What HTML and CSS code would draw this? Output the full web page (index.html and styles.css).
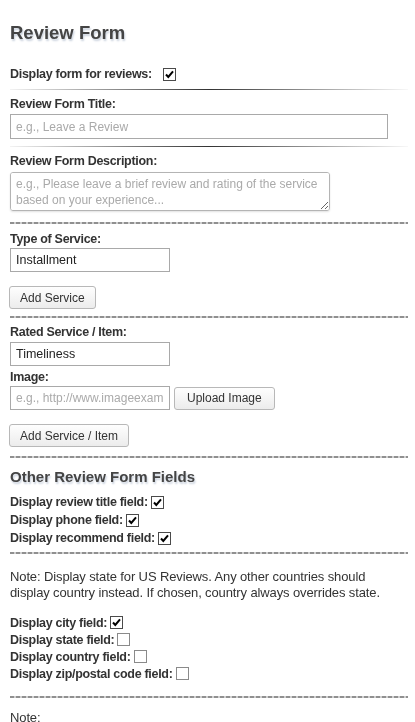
FILE: index.html
```html
<!DOCTYPE html>
<html lang="en">
<head>
    <meta charset="UTF-8">
    <meta name="viewport" content="width=device-width, initial-scale=1.0">
    <title>Review Form</title>
    <link rel="stylesheet" href="styles.css">
</head>
<body>
    <h2 class="form-title">Review Form</h2>

    <div class="toggle-row">
        <label>Display form for reviews:</label>
        <span class="cb checked"><svg viewBox="0 0 11 11"><path d="M2 5.5 L4.3 8 L9 2.3"/></svg></span>
    </div>
    <hr class="fade">

    <label class="field-label first">Review Form Title:</label>
    <input type="text" class="text-input full" placeholder="e.g., Leave a Review">
    <hr class="fade">

    <label class="field-label first">Review Form Description:</label>
    <textarea class="desc-input" placeholder="e.g., Please leave a brief review and rating of the service based on your experience..."></textarea>
    <hr class="dash dash-1">

    <label class="field-label after-dash">Type of Service:</label>
    <input type="text" class="text-input short tight" value="Installment">
    <button class="btn add-btn">Add Service</button>
    <hr class="dash">

    <label class="field-label first">Rated Service / Item:</label>
    <input type="text" class="text-input short" value="Timeliness">
    <label class="field-label image-label">Image:</label>
    <div class="image-row">
        <input type="text" class="text-input short" placeholder="e.g., http://www.imageexample.com/photo.jpg">
        <button class="btn upload-btn">Upload Image</button>
    </div>
    <button class="btn add-btn">Add Service / Item</button>
    <hr class="dash dash-2">

    <h3 class="sub-title">Other Review Form Fields</h3>
    <div class="check-list">
        <div class="check-row">Display review title field: <span class="cb checked"><svg viewBox="0 0 11 11"><path d="M2 5.5 L4.3 8 L9 2.3"/></svg></span></div>
        <div class="check-row">Display phone field: <span class="cb checked"><svg viewBox="0 0 11 11"><path d="M2 5.5 L4.3 8 L9 2.3"/></svg></span></div>
        <div class="check-row">Display recommend field: <span class="cb checked"><svg viewBox="0 0 11 11"><path d="M2 5.5 L4.3 8 L9 2.3"/></svg></span></div>
    </div>
    <hr class="dash dash-3">

    <p class="note">Note: Display state for US Reviews. Any other countries should display country instead. If chosen, country always overrides state.</p>

    <div class="check-list loc-list">
        <div class="check-row">Display city field: <span class="cb checked"><svg viewBox="0 0 11 11"><path d="M2 5.5 L4.3 8 L9 2.3"/></svg></span></div>
        <div class="check-row">Display state field: <span class="cb"></span></div>
        <div class="check-row">Display country field: <span class="cb"></span></div>
        <div class="check-row">Display zip/postal code field: <span class="cb"></span></div>
    </div>
    <hr class="dash dash-4">

    <p class="note last-note">Note:</p>
</body>
</html>
```

FILE: styles.css
```css
body {
    margin: 0;
    padding: 0 7px 0 10px;
    font-family: "Liberation Sans", Arial, sans-serif;
    font-size: 12px;
    color: #333;
}

.form-title {
    margin: 22px 0 0;
    font-size: 18.5px;
    line-height: 22px;
    color: #444;
    text-shadow: 1px 2px 2px #c9d1dd;
}

.toggle-row {
    margin-top: 22px;
    display: flex;
    align-items: center;
    height: 16px;
    font-weight: bold;
    font-size: 12.5px;
    letter-spacing: -0.3px;
}

.toggle-row .cb {
    margin-left: 11px;
}

hr {
    border: 0;
    margin: 0;
}

hr.fade {
    margin-top: 7px;
    height: 1px;
    background: linear-gradient(to right, rgba(0,0,0,0.05), rgba(0,0,0,0.8) 50%, rgba(0,0,0,0.03));
}

hr.dash {
    margin-top: 7px;
    height: 2px;
    background: repeating-linear-gradient(to right, #909090 0 4px, #cfcfcf 4px 6px);
}

hr.dash-1 { margin-top: 11px; }
hr.dash-2 { margin-top: 9px; }
hr.dash-3 { margin-top: 5px; }
hr.dash-4 { margin-top: 14px; }

.field-label {
    display: block;
    font-weight: bold;
    font-size: 12.5px;
    letter-spacing: -0.3px;
    line-height: 16px;
}

.field-label.first { margin-top: 6px; }
.field-label.after-dash { margin-top: 7px; }
.field-label.image-label { margin-top: 3px; }

.text-input {
    display: block;
    box-sizing: border-box;
    margin: 2px 0 0;
    height: 24px;
    padding: 0 5px;
    border: 1px solid #a9a9a9;
    border-radius: 0;
    font-family: inherit;
    font-size: 12.5px;
    color: #222;
    background: #fff;
}

.text-input.full {
    width: 378px;
    height: 25px;
}

.text-input.short {
    width: 160px;
}

.text-input.tight { margin-top: 1px; }

::placeholder {
    color: #aaa;
    font-size: 12px;
}

.desc-input {
    display: block;
    box-sizing: border-box;
    margin-top: 3px;
    width: 320px;
    height: 39px;
    padding: 3px 5px;
    border: 1px solid #b4b4b4;
    border-radius: 3px;
    box-shadow: 0 1px 2px rgba(0,0,0,0.12);
    font-family: inherit;
    font-size: 12px;
    line-height: 16px;
    resize: vertical;
}

.btn {
    display: block;
    box-sizing: border-box;
    height: 23px;
    padding: 0 10px;
    border: 1px solid #b8b8b8;
    border-radius: 3px;
    background: linear-gradient(#fefefe, #ececec);
    font-family: inherit;
    font-size: 12px;
    color: #333;
}

.upload-btn {
    padding: 0 12px;
}

.add-btn {
    margin-top: 14px;
    margin-left: -1px;
}

.image-row {
    display: flex;
    align-items: center;
    gap: 4px;
    margin-top: 1px;
}

.image-row .text-input {
    margin: 0;
}

.sub-title {
    margin: 9px 0 0;
    font-size: 15px;
    line-height: 20px;
    color: #444;
    text-shadow: 1px 2px 2px #c9d1dd;
}

.check-list {
    margin-top: 6px;
}

.check-row {
    display: flex;
    align-items: center;
    gap: 3px;
    height: 18px;
    font-weight: bold;
    font-size: 12.5px;
    letter-spacing: -0.3px;
}

.loc-list {
    margin-top: 13px;
}

.loc-list .check-row {
    height: 17px;
}

.cb {
    display: inline-block;
    box-sizing: border-box;
    width: 13px;
    height: 13px;
    border: 1px solid #8a8a8a;
    background: #fff;
}

.cb.checked {
    border-color: #4a4a4a;
}

.cb svg {
    display: block;
    width: 11px;
    height: 11px;
}

.cb svg path {
    fill: none;
    stroke: #000;
    stroke-width: 2;
}

.note {
    margin: 15px 0 0;
    font-size: 13px;
    letter-spacing: -0.12px;
    line-height: 16px;
    color: #333;
}

.last-note {
    margin-top: 12px;
}
```
